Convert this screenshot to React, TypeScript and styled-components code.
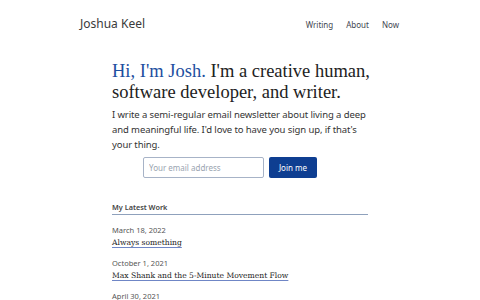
import React from 'react';
import styled, { createGlobalStyle } from 'styled-components';

const GlobalStyle = createGlobalStyle`
  html, body {
    margin: 0;
    padding: 0;
    background: #ffffff;
    overflow: hidden;
  }
  body {
    font-family: 'Noto Sans', 'Open Sans', sans-serif;
    color: #333;
  }
`;

const posts = [
  { date: 'March 18, 2022', title: 'Always something' },
  { date: 'October 1, 2021', title: 'Max Shank and the 5-Minute Movement Flow' },
  { date: 'April 30, 2021', title: 'Walking the long way home' },
];

function App() {
  return (
    <>
      <GlobalStyle />
      <Header>
        <Brand>Joshua Keel</Brand>
        <Nav>
          <NavLink>Writing</NavLink>
          <NavLink>About</NavLink>
          <NavLink>Now</NavLink>
        </Nav>
      </Header>
      <Main>
        <Title>
          <Accent>Hi, I'm Josh.</Accent> I'm a creative human, software developer, and writer.
        </Title>
        <Intro>
          I write a semi-regular email newsletter about living a deep and meaningful life. I'd
          love to have you sign up, if that's your thing.
        </Intro>
        <Form onSubmit={(e) => e.preventDefault()}>
          <EmailInput placeholder="Your email address" />
          <JoinButton type="submit">Join me</JoinButton>
        </Form>
        <SectionTitle>My Latest Work</SectionTitle>
        <PostList>
          {posts.map((p) => (
            <Post key={p.title}>
              <PostDate>{p.date}</PostDate>
              <PostTitle>{p.title}</PostTitle>
            </Post>
          ))}
        </PostList>
      </Main>
    </>
  );
}

const Header = styled.header`
  display: flex;
  align-items: center;
  justify-content: space-between;
  padding: 12px 81px 0 80px;
  height: 22px;
`;

const Brand = styled.div`
  font-size: 12px;
  color: #3a3a3a;
`;

const Nav = styled.nav`
  display: flex;
  gap: 13px;
  padding-top: 2px;
`;

const NavLink = styled.a`
  font-size: 8px;
  color: #3f4650;
`;

const Main = styled.main`
  width: 256px;
  margin: 0 auto;
  padding-top: 27px;
`;

const Title = styled.h1`
  width: 268px;
  margin: 0;
  font-family: 'Liberation Serif', 'DejaVu Serif', serif;
  font-weight: normal;
  font-size: 18.5px;
  line-height: 21px;
  color: #222;
`;

const Accent = styled.span`
  color: #1e4fa0;
`;

const Intro = styled.p`
  width: 260px;
  margin: 4px 0 0;
  font-size: 9.5px;
  line-height: 15px;
  letter-spacing: -0.1px;
  color: #333;
`;

const Form = styled.form`
  display: flex;
  gap: 5px;
  margin-top: 5px;
  padding-left: 31px;
`;

const EmailInput = styled.input`
  box-sizing: border-box;
  width: 121px;
  height: 21px;
  padding: 0 5px;
  border: 1px solid #a7b3c7;
  border-radius: 2px;
  font-family: 'Noto Sans', sans-serif;
  font-size: 8px;
  color: #333;
  &::placeholder {
    color: #9aa4b0;
  }
`;

const JoinButton = styled.button`
  box-sizing: border-box;
  width: 48px;
  height: 21px;
  border: none;
  border-radius: 2px;
  background: #0e3e91;
  color: #fff;
  font-family: 'Noto Sans', sans-serif;
  font-size: 8px;
  padding: 0;
`;

const SectionTitle = styled.h2`
  margin: 24px 0 0;
  padding-bottom: 2px;
  border-bottom: 1px solid #8fa1bc;
  font-size: 7.3px;
  line-height: 10px;
  font-weight: 600;
  color: #444;
`;

const PostList = styled.div`
  display: flex;
  flex-direction: column;
  gap: 9px;
  padding-top: 10px;
`;

const Post = styled.div`
  display: flex;
  flex-direction: column;
`;

const PostDate = styled.div`
  font-size: 7.5px;
  line-height: 11px;
  color: #555;
`;

const PostTitle = styled.a`
  align-self: flex-start;
  font-family: 'DejaVu Serif', 'Liberation Serif', serif;
  font-size: 7.6px;
  line-height: 13px;
  color: #222;
  text-decoration: underline;
  text-decoration-color: #6f86c6;
  text-underline-offset: 2px;
`;

export default App;
